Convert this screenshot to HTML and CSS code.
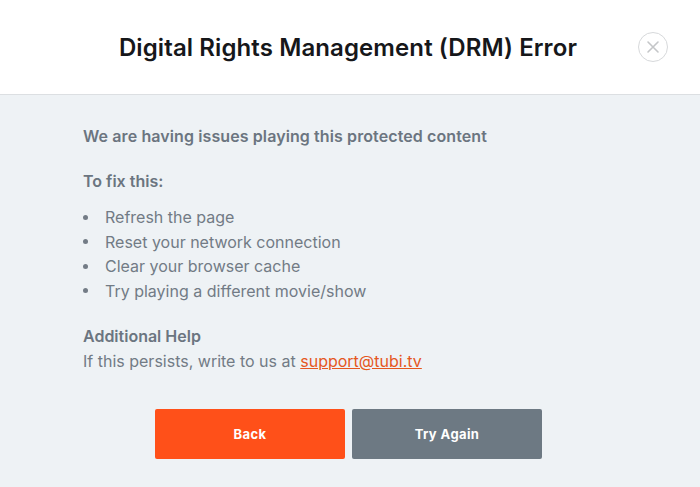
FILE: index.html
```html
<!DOCTYPE html>
<html lang="en">
<head>
<meta charset="utf-8">
<title>DRM Error</title>
<link rel="stylesheet" href="styles.css">
</head>
<body>
<div class="modal">
  <header class="head">
    <h1 class="title">Digital Rights Management (DRM) Error</h1>
    <button class="close" aria-label="Close">
      <svg width="14" height="14" viewBox="0 0 14 14"><path d="M2 2L12 12M12 2L2 12" stroke="#c4c6c8" stroke-width="1.6" stroke-linecap="round"/></svg>
    </button>
  </header>
  <main class="content">
    <p class="lead">We are having issues playing this protected content</p>
    <p class="sub">To fix this:</p>
    <ul class="steps">
      <li>Refresh the page</li>
      <li>Reset your network connection</li>
      <li>Clear your browser cache</li>
      <li>Try playing a different movie/show</li>
    </ul>
    <p class="help-title">Additional Help</p>
    <p class="help">If this persists, write to us at <a href="#" class="mail">support@tubi.tv</a></p>
    <div class="actions">
      <button class="btn btn-back">Back</button>
      <button class="btn btn-retry">Try Again</button>
    </div>
  </main>
</div>
</body>
</html>
```

FILE: styles.css
```css
* { box-sizing: border-box; }
html, body { margin: 0; padding: 0; }
body {
  width: 700px;
  height: 487px;
  background: #eef2f5;
  font-family: Inter, "Open Sans", sans-serif;
  overflow: hidden;
}
.modal { display: flex; flex-direction: column; }
.head {
  position: relative;
  height: 95px;
  background: #fff;
  border-bottom: 1px solid #dcdfe2;
  display: flex;
  align-items: center;
  justify-content: center;
}
.title {
  margin: 0 4px 0 0;
  font-size: 24px;
  font-weight: 600;
  color: #16171a;
  letter-spacing: 0.1px;
}
.close {
  position: absolute;
  right: 32px;
  top: 32px;
  width: 30px;
  height: 30px;
  border-radius: 50%;
  border: 1.5px solid #d7d9db;
  background: #fff;
  padding: 0;
  display: flex;
  align-items: center;
  justify-content: center;
}
.content {
  padding: 26px 0 0 83px;
  color: #6b7580;
  font-size: 16px;
}
.content p { margin: 0; }
.lead { font-weight: 600; line-height: 30px; letter-spacing: 0.1px; }
.sub { font-weight: 600; margin-top: 15px !important; line-height: 30px; }
.steps {
  margin: 9px 0 0 0;
  padding: 0;
  list-style: none;
  line-height: 24.5px;
  font-size: 16px;
  color: #727b85;
}
.steps li {
  display: flex;
  align-items: center;
  gap: 17px;
}
.steps li::before {
  content: "";
  width: 5px;
  height: 5px;
  border-radius: 50%;
  background: #737c86;
  margin-left: 0;
}
.help-title { font-weight: 600; margin-top: 22px !important; line-height: 22px; }
.help { line-height: 28px; color: #727b85; }
.mail { color: #e5571e; }
.actions {
  display: flex;
  gap: 7px;
  margin: 34px 0 0 72px;
}
.btn {
  width: 190px;
  height: 50px;
  border: none;
  border-radius: 2px;
  color: #fff;
  font-family: Inter, "Open Sans", sans-serif;
  font-size: 13px;
  font-weight: 700;
  letter-spacing: 0.4px;
}
.btn-back { background: #ff5019; }
.btn-retry { background: #6d7983; }
```
